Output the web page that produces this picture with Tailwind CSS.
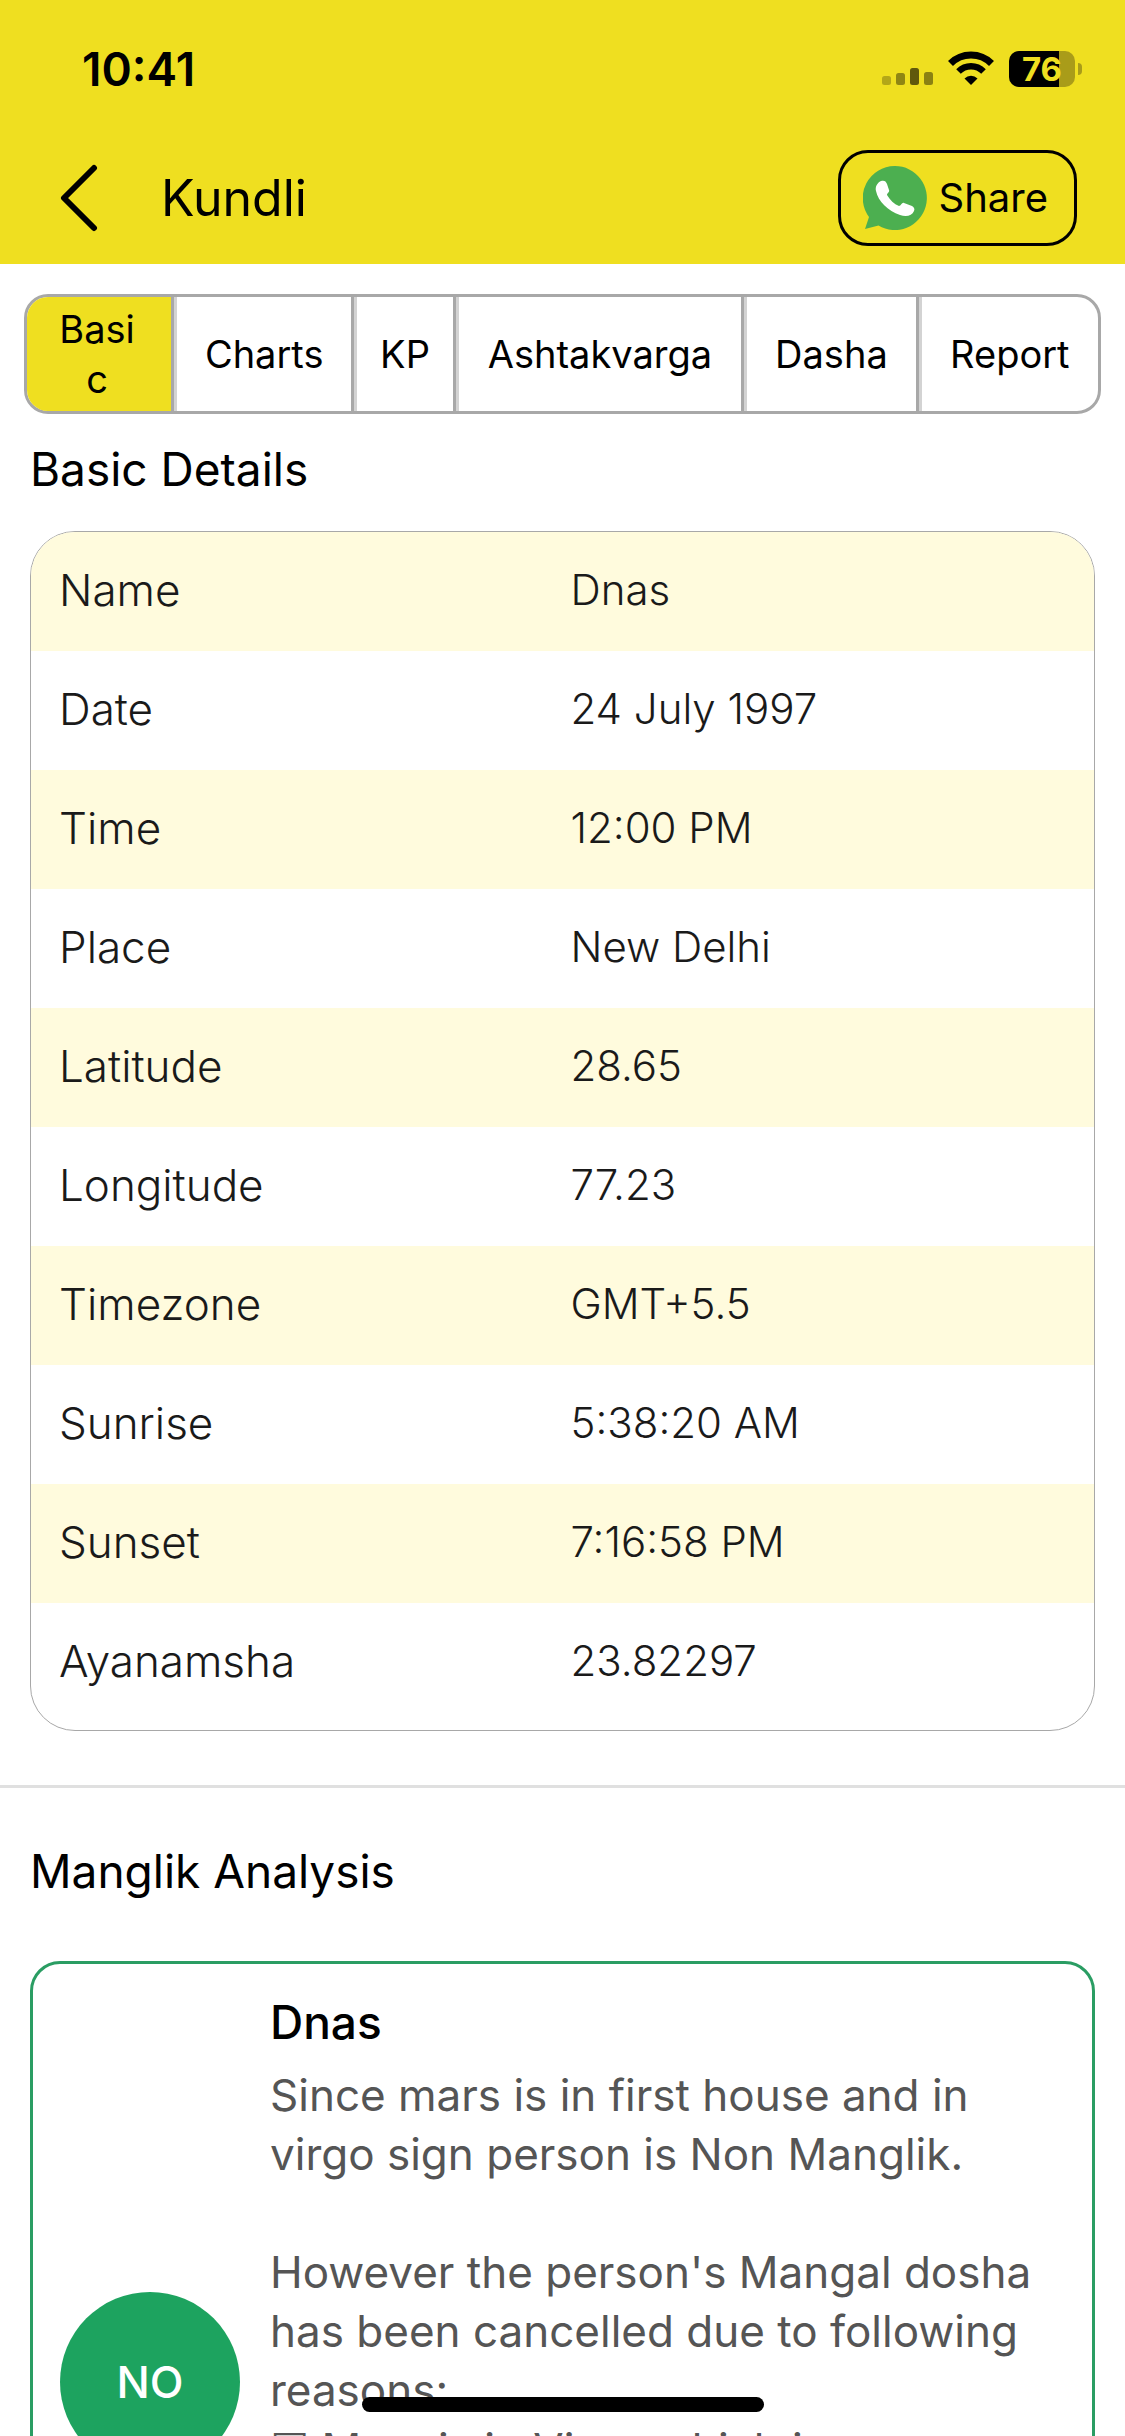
<!DOCTYPE html>
<html lang="en">
<head>
    <meta charset="UTF-8">
    <meta name="viewport" content="width=device-width, initial-scale=1.0">
    <title>Kundli</title>
    <script src="https://cdn.jsdelivr.net/npm/@tailwindcss/browser@4"></script>
</head>
<body class="relative flex h-screen flex-col overflow-hidden bg-white font-['Inter','Liberation_Sans',sans-serif] text-black">

    <header class="shrink-0 bg-[#efdf20] pb-[18px]">
        <!-- status bar -->
        <div class="flex h-[150px] items-center justify-between pt-3 pr-[43px] pb-6 pl-[82px]">
            <span class="text-[46px] font-semibold">10:41</span>
            <div class="flex items-center gap-[15px]">
                <svg class="h-9 w-[51px]" viewBox="0 0 51 36" fill="#000">
                    <rect x="0" y="25" width="9" height="9" rx="2.5" opacity=".25"/>
                    <rect x="14" y="22" width="9" height="12" rx="2.5" opacity=".4"/>
                    <rect x="28" y="17" width="9" height="17" rx="2.5" opacity=".6"/>
                    <rect x="42" y="21" width="9" height="13" rx="2.5" opacity=".42"/>
                </svg>
                <svg class="h-9 w-[46px]" viewBox="0 0 46 36" fill="none" stroke="#000">
                    <path d="M2.500 12.500a29 29 0 0 1 41 0" stroke-width="7"/>
                    <path d="M10.500 20.500a17.700 17.700 0 0 1 25 0" stroke-width="6.500"/>
                    <path d="M16.500 27.500a9.200 9.200 0 0 1 13 0L23 34z" fill="#000" stroke="none"/>
                </svg>
                <div class="flex items-center gap-[3px]">
                    <div class="relative flex h-9 w-[66px] items-center justify-center rounded-[10px] bg-[#a99c19]">
                        <div class="absolute inset-y-0 left-0 w-[76%] rounded-l-[10px] bg-black"></div>
                        <span class="relative text-[33px] leading-9 font-bold text-[#efdf20]">76</span>
                    </div>
                    <div class="h-3 w-1 rounded-r-full bg-[#a99c19]"></div>
                </div>
            </div>
        </div>

        <div class="flex h-24 items-center pr-12 pl-[60px]">
            <button aria-label="Back" class="mr-[63px]">
                <svg class="h-[68px] w-[38px]" viewBox="0 0 38 68" fill="none" stroke="#000" stroke-width="6" stroke-linecap="round" stroke-linejoin="round">
                    <path d="M34 4L4 34l30 30"/>
                </svg>
            </button>
            <h1 class="flex-1 text-[50px]">Kundli</h1>
            <button class="flex h-24 items-center gap-3 rounded-[30px] border-3 border-black pr-[26px] pl-[22px] text-[40px]">
                <svg class="size-[64px]" viewBox="0 0 64 64">
                    <path fill="#4caf50" d="M32 0a32 32 0 1 1-16.500 59.500L2 63l4-12A32 32 0 0 1 32 0z"/>
                    <path fill="#fff" d="M18 15c3-1 5 0 6 3l2 6c1 2-2 3-2 5 3 5 7 9 12 11 2 0 3-4 5-3l8 3c2 1 3 3 2 5-2 5-8 6-14 4C25 45 15 35 13 25c-1-4 1-8 5-10z"/>
                </svg>
                Share
            </button>
        </div>
    </header>

    <main class="flex-1 overflow-hidden">
        <nav class="mx-6 mt-[30px] flex h-[120px] overflow-hidden rounded-[24px] border-3 border-[#a8a8a8] text-[38px] leading-[50px]">
            <button class="w-[147px] border-r-3 border-[#a8a8a8] bg-[#efdf20] pr-8 pl-7 break-all">Basic</button>
            <button class="flex-[174] border-r-3 border-l-3 border-r-[#a8a8a8] border-l-[#d3d3d3]">Charts</button>
            <button class="flex-[95] border-r-3 border-l-3 border-r-[#a8a8a8] border-l-[#d3d3d3]">KP</button>
            <button class="flex-[282] border-r-3 border-l-3 border-r-[#a8a8a8] border-l-[#d3d3d3]">Ashtakvarga</button>
            <button class="flex-[168] border-r-3 border-l-3 border-r-[#a8a8a8] border-l-[#d3d3d3]">Dasha</button>
            <button class="flex-[176] border-l-3 border-[#d3d3d3]">Report</button>
        </nav>

        <section class="px-[30px] pb-[54px]">
            <h2 class="pt-[22px] pb-[28px] text-[46px] leading-[67px]">Basic Details</h2>
            <div class="overflow-hidden rounded-[45px] border border-[#a8a8a8] pb-2">
                <table class="w-full table-fixed text-left text-[42px] leading-[60px] font-light text-[#1a1a1a]">
                    <tbody>
                        <tr class="h-[119px] bg-[#fffbdd]"><th scope="row" class="pb-1 pl-7 text-[44px] font-light">Name</th><td class="pb-1 pl-2">Dnas</td></tr>
                        <tr class="h-[119px]"><th scope="row" class="pb-1 pl-7 text-[44px] font-light">Date</th><td class="pb-1 pl-2">24 July 1997</td></tr>
                        <tr class="h-[119px] bg-[#fffbdd]"><th scope="row" class="pb-1 pl-7 text-[44px] font-light">Time</th><td class="pb-1 pl-2">12:00 PM</td></tr>
                        <tr class="h-[119px]"><th scope="row" class="pb-1 pl-7 text-[44px] font-light">Place</th><td class="pb-1 pl-2">New Delhi</td></tr>
                        <tr class="h-[119px] bg-[#fffbdd]"><th scope="row" class="pb-1 pl-7 text-[44px] font-light">Latitude</th><td class="pb-1 pl-2">28.65</td></tr>
                        <tr class="h-[119px]"><th scope="row" class="pb-1 pl-7 text-[44px] font-light">Longitude</th><td class="pb-1 pl-2">77.23</td></tr>
                        <tr class="h-[119px] bg-[#fffbdd]"><th scope="row" class="pb-1 pl-7 text-[44px] font-light">Timezone</th><td class="pb-1 pl-2">GMT+5.5</td></tr>
                        <tr class="h-[119px]"><th scope="row" class="pb-1 pl-7 text-[44px] font-light">Sunrise</th><td class="pb-1 pl-2">5:38:20 AM</td></tr>
                        <tr class="h-[119px] bg-[#fffbdd]"><th scope="row" class="pb-1 pl-7 text-[44px] font-light">Sunset</th><td class="pb-1 pl-2">7:16:58 PM</td></tr>
                        <tr class="h-[119px]"><th scope="row" class="pb-1 pl-7 text-[44px] font-light">Ayanamsha</th><td class="pb-1 pl-2">23.82297</td></tr>
                    </tbody>
                </table>
            </div>
        </section>

        <hr class="border-t-3 border-[#e0e0e0]">

        <section class="px-[30px] pt-[50px]">
            <h2 class="text-[46px] leading-[67px]">Manglik Analysis</h2>
            <div class="mt-[56px] flex items-center gap-[30px] rounded-[30px] border-3 border-[#2a9d63] px-[27px] py-[25px]">
                <div class="flex size-[180px] shrink-0 items-center justify-center rounded-full bg-[#1da35f] text-[44px] font-medium text-white">NO</div>
                <div class="min-w-0 flex-1">
                    <h3 class="text-[46px] leading-[67px] font-medium">Dnas</h3>
                    <p class="mt-[10px] text-[44px] leading-[59px] text-[#555]">
                        Since mars is in first house and in<br>virgo sign person is Non Manglik.<br><br>
                        However the person's Mangal dosha<br>has been cancelled due to following<br>reasons:<br>
                        ☐ Mars is in Virgo which is<br>a sign of Mercury.<br><br><br><br><br>
                    </p>
                </div>
            </div>
        </section>
    </main>

    <!-- home indicator -->
    <div class="absolute bottom-6 left-1/2 h-[15px] w-[402px] -translate-x-1/2 rounded-full bg-black"></div>
</body>
</html>
